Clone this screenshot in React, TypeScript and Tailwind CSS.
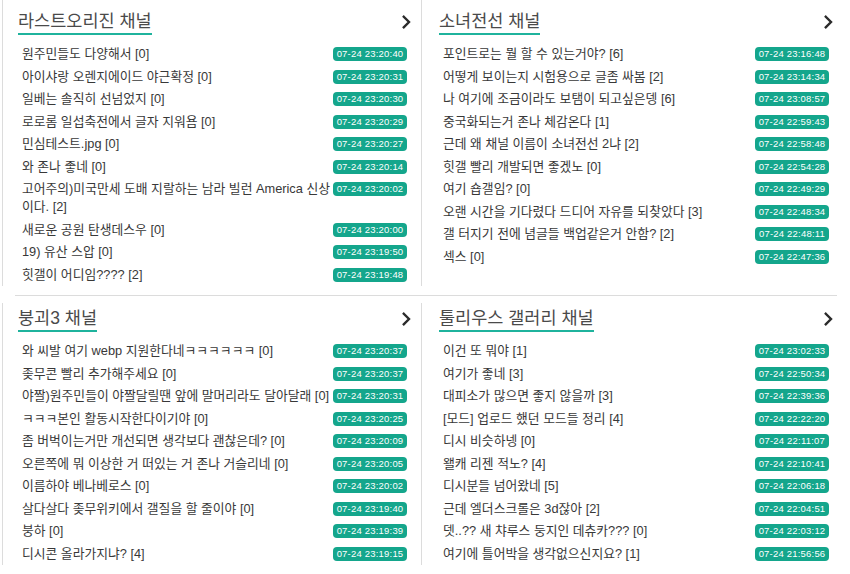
import React from "react";

type Post = { title: string; time: string };
type Channel = { name: string; posts: Post[] };

const topRow: Channel[] = [
  {
    name: "라스트오리진 채널",
    posts: [
      { title: "원주민들도 다양해서 [0]", time: "07-24 23:20:40" },
      { title: "아이샤랑 오렌지에이드 야근확정 [0]", time: "07-24 23:20:31" },
      { title: "일베는 솔직히 선넘었지 [0]", time: "07-24 23:20:30" },
      { title: "로로롬 일섭축전에서 글자 지워욤 [0]", time: "07-24 23:20:29" },
      { title: "민심테스트.jpg [0]", time: "07-24 23:20:27" },
      { title: "와 존나 좋네 [0]", time: "07-24 23:20:14" },
      { title: "고어주의)미국만세 도배 지랄하는 남라 빌런 America 신상이다. [2]", time: "07-24 23:20:02" },
      { title: "새로운 공원 탄생데스우 [0]", time: "07-24 23:20:00" },
      { title: "19) 유산 스압 [0]", time: "07-24 23:19:50" },
      { title: "힛갤이 어디임???? [2]", time: "07-24 23:19:48" },
    ],
  },
  {
    name: "소녀전선 채널",
    posts: [
      { title: "포인트로는 뭘 할 수 있는거야? [6]", time: "07-24 23:16:48" },
      { title: "어떻게 보이는지 시험용으로 글좀 싸봄 [2]", time: "07-24 23:14:34" },
      { title: "나 여기에 조금이라도 보탬이 되고싶은뎅 [6]", time: "07-24 23:08:57" },
      { title: "중국화되는거 존나 체감온다 [1]", time: "07-24 22:59:43" },
      { title: "근데 왜 채널 이름이 소녀전선 2냐 [2]", time: "07-24 22:58:48" },
      { title: "힛갤 빨리 개발되면 좋겠노 [0]", time: "07-24 22:54:28" },
      { title: "여기 숍갤임? [0]", time: "07-24 22:49:29" },
      { title: "오랜 시간을 기다렸다 드디어 자유를 되찾았다 [3]", time: "07-24 22:48:34" },
      { title: "갤 터지기 전에 념글들 백업같은거 안함? [2]", time: "07-24 22:48:11" },
      { title: "섹스 [0]", time: "07-24 22:47:36" },
    ],
  },
];

const bottomRow: Channel[] = [
  {
    name: "붕괴3 채널",
    posts: [
      { title: "와 씨발 여기 webp 지원한다네ㅋㅋㅋㅋㅋㅋ [0]", time: "07-24 23:20:37" },
      { title: "좆무콘 빨리 추가해주세요 [0]", time: "07-24 23:20:37" },
      { title: "야짤)원주민들이 야짤달릴땐 앞에 말머리라도 달아달래 [0]", time: "07-24 23:20:31" },
      { title: "ㅋㅋㅋ본인 활동시작한다이기야 [0]", time: "07-24 23:20:25" },
      { title: "좀 버벅이는거만 개선되면 생각보다 괜찮은데? [0]", time: "07-24 23:20:09" },
      { title: "오른쪽에 뭐 이상한 거 떠있는 거 존나 거슬리네 [0]", time: "07-24 23:20:05" },
      { title: "이름하야 베나베로스 [0]", time: "07-24 23:20:02" },
      { title: "살다살다 좆무위키에서 갤질을 할 줄이야 [0]", time: "07-24 23:19:40" },
      { title: "붕하 [0]", time: "07-24 23:19:39" },
      { title: "디시콘 올라가지냐? [4]", time: "07-24 23:19:15" },
    ],
  },
  {
    name: "툴리우스 갤러리 채널",
    posts: [
      { title: "이건 또 뭐야 [1]", time: "07-24 23:02:33" },
      { title: "여기가 좋네 [3]", time: "07-24 22:50:34" },
      { title: "대피소가 많으면 좋지 않을까 [3]", time: "07-24 22:39:36" },
      { title: "[모드] 업로드 했던 모드들 정리 [4]", time: "07-24 22:22:20" },
      { title: "디시 비슷하넹 [0]", time: "07-24 22:11:07" },
      { title: "왤캐 리젠 적노? [4]", time: "07-24 22:10:41" },
      { title: "디시분들 넘어왔네 [5]", time: "07-24 22:06:18" },
      { title: "근데 엘더스크롤은 3d잖아 [2]", time: "07-24 22:04:51" },
      { title: "뎃..?? 새 챠루스 둥지인 데츄카??? [0]", time: "07-24 22:03:12" },
      { title: "여기에 틀어박을 생각없으신지요? [1]", time: "07-24 21:56:56" },
    ],
  },
];

function Chevron() {
  return (
    <svg width="9" height="14" viewBox="0 0 9 14" className="shrink-0">
      <polyline points="1.8,1.8 7,7 1.8,12.2" fill="none" stroke="#2b2b2b" strokeWidth="2.4" strokeLinecap="square" />
    </svg>
  );
}

function ChannelPanel({ channel, right, top }: { channel: Channel; right?: boolean; top?: boolean }) {
  return (
    <section
      className={`border-l border-[#dcdcdc] pr-[14px] ${right ? "pl-[17px]" : "pl-[15px]"} ${top ? "pt-[9px]" : "mt-[7px] pt-[3px]"}`}
    >
      <div className="mr-[-4px] flex items-center justify-between">
        <h2 className="border-b-2 border-[#1fb39d] text-[17.5px] leading-[24px] font-normal text-[#4a4a4a]">{channel.name}</h2>
        <Chevron />
      </div>
      <ul className="mt-[8px] pl-[4px]">
        {channel.posts.map((post, i) => (
          <li key={i} className="flex items-start py-[2.25px]">
            <span className="flex-1 text-[12.8px] leading-[18px] text-[#383838]">{post.title}</span>
            <span className="mt-[2px] h-[14px] w-[74px] shrink-0 rounded-[4px] bg-[#14a68c] text-center text-[9.5px] leading-[14px] tracking-[0.2px] text-white">
              {post.time}
            </span>
          </li>
        ))}
      </ul>
    </section>
  );
}

export default function App() {
  return (
    <div className="ml-[2px] w-[841px] bg-white font-['Liberation_Sans','Noto_Sans_CJK_KR',sans-serif]">
      <div className="grid grid-cols-[419px_1fr]">
        <ChannelPanel channel={topRow[0]} top />
        <ChannelPanel channel={topRow[1]} top right />
      </div>
      <div className="mt-[9px] ml-[13px] mr-[6px] h-px bg-[#dcdcdc]" />
      <div className="grid grid-cols-[419px_1fr]">
        <ChannelPanel channel={bottomRow[0]} />
        <ChannelPanel channel={bottomRow[1]} right />
      </div>
    </div>
  );
}
